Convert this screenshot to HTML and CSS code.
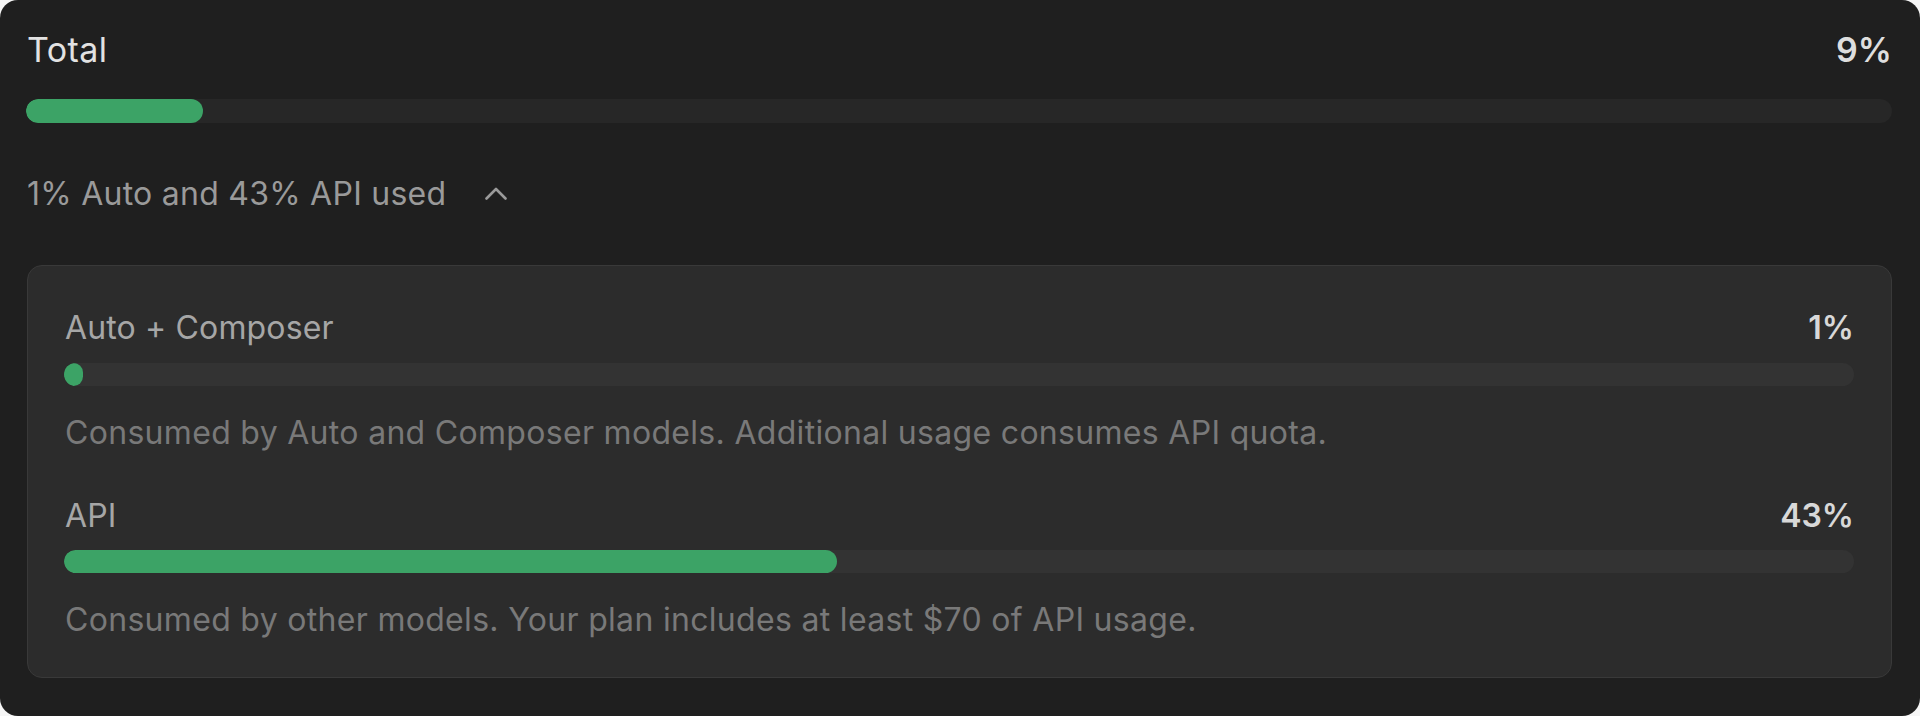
FILE: index.html
```html
<!DOCTYPE html>
<html lang="en">
<head>
<meta charset="utf-8">
<title>Usage</title>
<link rel="stylesheet" href="styles.css">
</head>
<body>
<div class="panel">
  <div class="row head">
    <span class="title">Total</span>
    <span class="pct pct-big">9%</span>
  </div>
  <div class="track track-outer"><div class="fill" style="width:9.5%"></div></div>

  <div class="summary">
    <span>1% Auto and 43% API used</span>
    <svg class="chev" width="22" height="14" viewBox="0 0 22 14" aria-hidden="true">
      <polyline points="1.5,12.5 11,3 20.5,12.5" fill="none" stroke="#9a9a9a" stroke-width="2.6" stroke-linecap="round" stroke-linejoin="round"/>
    </svg>
  </div>

  <div class="breakdown">
    <div class="item">
      <div class="row">
        <span class="label">Auto + Composer</span>
        <span class="pct">1%</span>
      </div>
      <div class="track track-inner"><div class="fill" style="width:19px"></div></div>
      <p class="desc">Consumed by Auto and Composer models. Additional usage consumes API quota.</p>
    </div>
    <div class="item item-second">
      <div class="row">
        <span class="label">API</span>
        <span class="pct">43%</span>
      </div>
      <div class="track track-inner"><div class="fill" style="width:43.2%"></div></div>
      <p class="desc">Consumed by other models. Your plan includes at least $70 of API usage.</p>
    </div>
  </div>
</div>
</body>
</html>
```

FILE: styles.css
```css
html, body {
  margin: 0;
  padding: 0;
  background: #f6f6f6;
}

body {
  font-family: Inter, "Noto Sans", "Liberation Sans", sans-serif;
}

.panel {
  box-sizing: border-box;
  width: 1920px;
  height: 716px;
  background: #1f1f1f;
  border-radius: 18px;
  padding: 30px 28px 0 26px;
  display: flex;
  flex-direction: column;
}

.row {
  display: flex;
  justify-content: space-between;
  align-items: baseline;
}

.title {
  font-size: 34px;
  line-height: 40px;
  color: #e2e2e2;
  font-weight: 400;
  letter-spacing: 0.4px;
  padding-left: 1px;
}

.pct {
  font-size: 32px;
  line-height: 38px;
  font-weight: 600;
  color: #d8d8d8;
}

.pct-big {
  font-size: 34px;
  line-height: 40px;
  color: #dedede;
  margin-right: 0;
}

.track {
  position: relative;
  border-radius: 12px;
  overflow: hidden;
}

.track-outer {
  height: 24px;
  margin-top: 29px;
  background: #272727;
}

.track-inner {
  height: 23px;
  background: #333333;
}

.fill {
  height: 100%;
  background: #3ca366;
  border-radius: 12px;
}

.summary {
  margin-top: 52px;
  display: flex;
  align-items: center;
  gap: 39px;
  font-size: 32px;
  line-height: 38px;
  color: #9a9a9a;
  letter-spacing: 0.25px;
  padding-left: 1px;
}

.chev {
  display: block;
  margin-top: -2px;
}

.breakdown {
  box-sizing: border-box;
  margin-top: 52px;
  margin-left: 1px;
  height: 413px;
  background: #2c2c2c;
  border: 1px solid #393939;
  border-radius: 15px;
  padding: 43px 37px 0 36px;
}

.item .row {
  margin-bottom: 16px;
}

.item-second {
  margin-top: 45px;
}

.item-second .row {
  margin-bottom: 15px;
}

.label {
  font-size: 32px;
  line-height: 38px;
  color: #a6a6a6;
  letter-spacing: 0.15px;
  padding-left: 1px;
}

.desc {
  margin: 28px 0 0 0;
  font-size: 32px;
  line-height: 38px;
  color: #797979;
  letter-spacing: 0.31px;
  padding-left: 1px;
}
```
